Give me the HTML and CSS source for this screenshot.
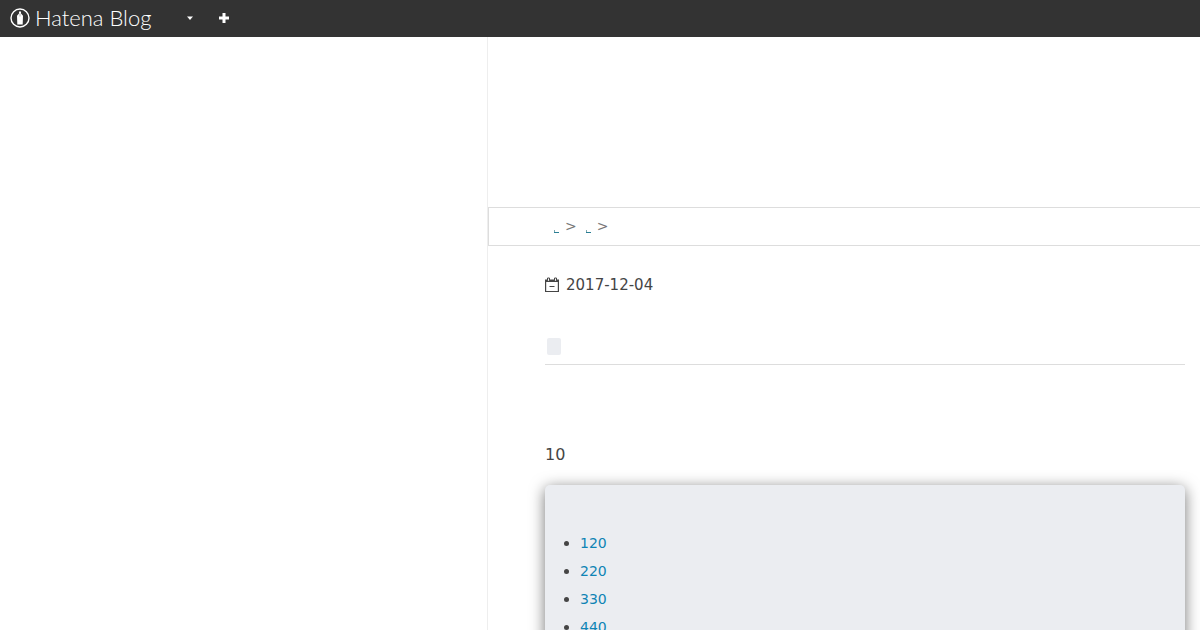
FILE: index.html
```
<!DOCTYPE html>
<html lang="ja">
<head>
    <meta charset="UTF-8">
    <meta name="viewport" content="width=device-width, initial-scale=1.0">
    <title>Hatena Blog</title>
    <link rel="stylesheet" href="styles.css">
</head>
<body>

    <header class="globalheader">
        <a href="#" class="logo">
            <svg class="logo-mark" viewBox="0 0 20 20" width="20" height="20" aria-hidden="true">
                <circle cx="10" cy="10" r="9" fill="none" stroke="#fff" stroke-width="1.4"/>
                <path d="M9 3.500h2v2l2 2.200-.3 8.800H7.300L7 7.700l2-2.200z" fill="#fff"/>
                <path d="M10 5.500v3" stroke="#777" stroke-width=".6"/>
            </svg>
            <span>Hatena Blog</span>
        </a>
        <button type="button" class="menu-btn" aria-label="Menu">
            <svg viewBox="0 0 6 4" width="6" height="4"><path d="M0 .5h6L3 4z" fill="#fff"/></svg>
        </button>
        <a href="#" class="add-btn" aria-label="New entry">
            <svg viewBox="0 0 10 10" width="10" height="10"><path d="M3.500 0h3v3.500H10v3H6.500V10h-3V6.500H0v-3h3.500z" fill="#fff"/></svg>
        </a>
    </header>

    <div class="container">
        <aside class="side"></aside>

        <main class="main">
            <nav class="breadcrumb">
                <a href="#" aria-label="Top"><svg viewBox="0 0 5 4" width="5" height="4"><path d="M0 1h1v2H0z" fill="#7fa9b0"/><path d="M0 3h5v1H0z" fill="#2a7f95"/></svg></a>
                <span>&gt;</span>
                <a href="#" aria-label="Category"><svg viewBox="0 0 5 4" width="5" height="4"><path d="M0 1h1v2H0z" fill="#7fa9b0"/><path d="M0 3h5v1H0z" fill="#2a7f95"/></svg></a>
                <span>&gt;</span>
            </nav>

            <article class="entry">
                <div class="date">
                    <svg viewBox="0 0 14 16" width="14" height="16" aria-hidden="true">
                        <path d="M.6 3.500h12.800v11H.6z" fill="none" stroke="#454545" stroke-width="1.2"/>
                        <path d="M0 2.500h14V5H0z" fill="#454545"/>
                        <path d="M2.500 3.800V1h2v2.800M9.500 3.800V1h2v2.800" fill="#fff" stroke="#454545"/>
                        <path d="M4.500 9.500h5" stroke="#454545"/>
                    </svg>
                    <time datetime="2017-12-04">2017-12-04</time>
                </div>

                <div class="category">
                    <a href="#" aria-label="Category"></a>
                </div>

                <p class="lead">10</p>

                <!-- table of contents -->
                <div class="toc">
                    <ul>
                        <li><a href="#">120</a></li>
                        <li><a href="#">220</a></li>
                        <li><a href="#">330</a></li>
                        <li><a href="#">440</a></li>
                    </ul>
                </div>
            </article>
        </main>
    </div>

</body>
</html>
```

FILE: styles.css
```
* {
    box-sizing: border-box;
}

body {
    margin: 0;
    min-height: 100vh;
    display: flex;
    flex-direction: column;
    color: #454545;
    background: #fff;
    font-family: "DejaVu Sans", sans-serif;
    font-size: 15px;
}

a {
    color: #0e84b5;
    text-decoration: none;
}

.globalheader {
    display: flex;
    align-items: center;
    height: 37px;
    padding: 0 10px 1px;
    background: #333;
}

.logo {
    display: flex;
    align-items: center;
    gap: 5px;
    color: #fff;
    font-family: Lato, sans-serif;
    font-size: 22px;
    font-weight: 300;
    line-height: 34px;
}

.menu-btn {
    display: flex;
    margin-left: 36px;
    padding: 0;
    border: 0;
    background: none;
}

.add-btn {
    display: flex;
    margin-left: 26px;
}

.container {
    flex: 1;
    display: flex;
}

.side {
    width: 488px;
    border-right: 1px solid #eee;
}

.main {
    flex: 1;
    padding-top: 170px;
}

.breadcrumb {
    display: flex;
    align-items: center;
    gap: 6px;
    height: 39px;
    padding: 0 0 2px 65px;
    border: 1px solid #ddd;
    border-right: 0;
    color: #777;
    font-size: 14px;
}

.breadcrumb a {
    display: flex;
    padding-top: 10px;
}

.breadcrumb span + a {
    margin-left: 3px;
}

.entry {
    padding: 28px 15px 0 57px;
}

.date {
    display: flex;
    align-items: center;
    gap: 7px;
    line-height: 22px;
}

.category {
    display: flex;
    margin-top: 42px;
    padding: 0 2px 9px;
    border-bottom: 1px solid #ddd;
}

.category a {
    width: 14px;
    height: 17px;
    border-radius: 2px;
    background: #ebedf1;
}

.lead {
    margin: 76px 0 0;
    font-size: 16px;
    line-height: 28px;
}

.toc {
    margin-top: 16px;
    padding: 44px 15px 20px;
    border-radius: 5px;
    background: #ebedf1;
    box-shadow: 0 3px 15px #777;
    font-size: 14px;
    line-height: 28px;
}

.toc ul {
    margin: 0;
    padding-left: 20px;
}

.toc li::marker {
    font-size: 15px;
}
```
